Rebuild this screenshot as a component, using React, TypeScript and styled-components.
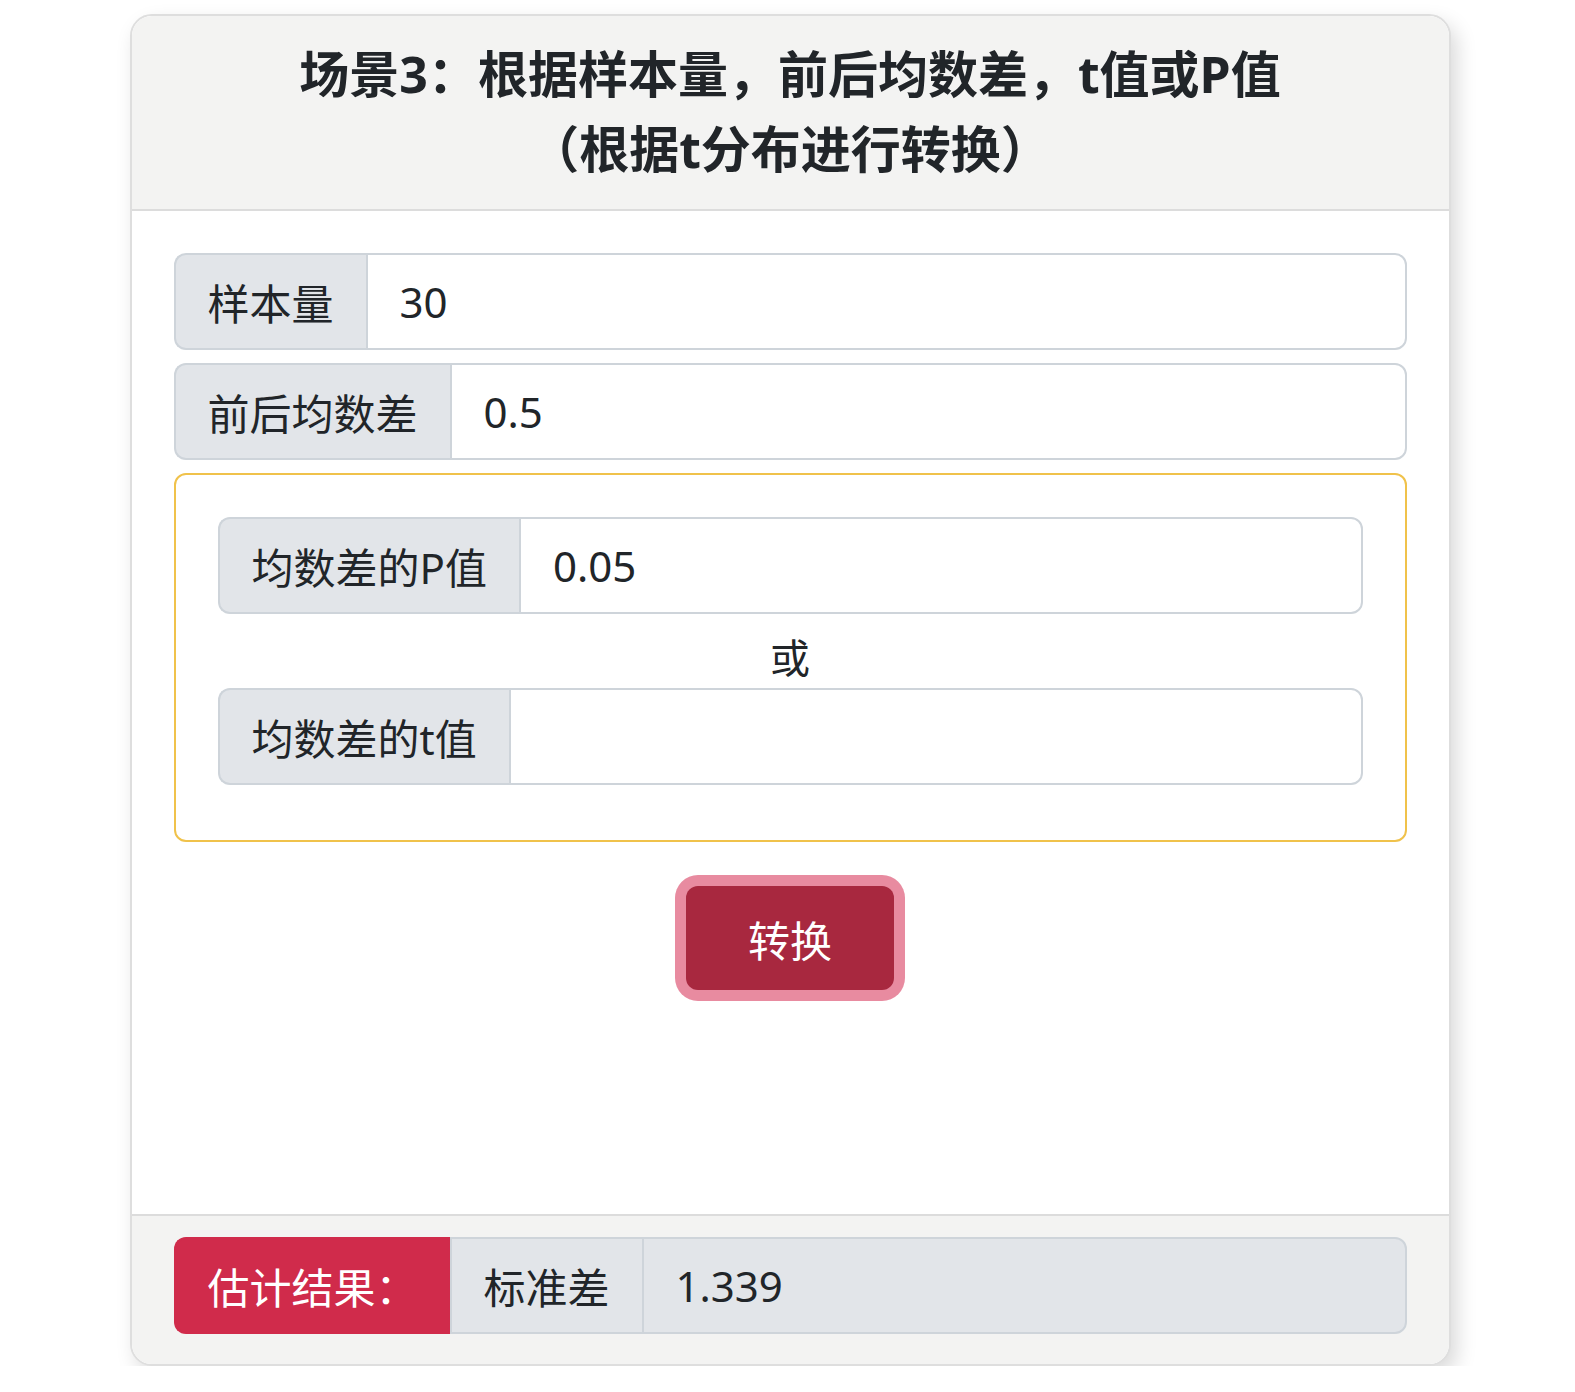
import React from 'react';
import styled, { createGlobalStyle } from 'styled-components';

const GlobalStyle = createGlobalStyle`
  html, body {
    margin: 0;
    background: #fff;
    font-family: "Noto Sans", "Noto Sans CJK SC", sans-serif;
    color: #212529;
  }
`;

const Page = styled.div`
  display: flex;
  justify-content: center;
  padding: 14px 0 0 5px;
`;

const Card = styled.div`
  width: 1321px;
  box-sizing: border-box;
  background: #fff;
  border: 2px solid #dedede;
  border-radius: 22px;
  overflow: hidden;
  box-shadow: 6px 9px 20px rgba(0, 0, 0, 0.15);
`;

const CardHeader = styled.div`
  background: #f3f3f2;
  border-bottom: 2px solid #dcdcdc;
  padding: 21px 20px 22px;
  text-align: center;
`;

const Title = styled.h2`
  margin: 0;
  font-size: 50px;
  font-weight: 700;
  line-height: 75px;
  color: #212529;
`;

const CardBody = styled.div`
  box-sizing: border-box;
  min-height: 1003px;
  padding: 42px 42px 40px;
`;

const InputGroup = styled.div<{ $last?: boolean }>`
  display: flex;
  height: 97px;
  margin-bottom: ${(p) => (p.$last ? '0' : '13px')};
`;

const Addon = styled.span<{ $tone?: 'danger' | 'muted' }>`
  display: flex;
  align-items: center;
  box-sizing: border-box;
  padding: 0 32px;
  font-size: 42px;
  white-space: nowrap;
  background: ${(p) => (p.$tone === 'danger' ? '#d02b4b' : '#e2e5e9')};
  color: ${(p) => (p.$tone === 'danger' ? '#fff' : '#212529')};
  border: 2px solid ${(p) => (p.$tone === 'danger' ? '#d02b4b' : '#ced4da')};
  border-right-width: 0;

  &:first-child {
    border-radius: 12px 0 0 12px;
  }
  & + & {
    border-left: 2px solid #ced4da;
  }
`;

const Field = styled.input<{ $readonly?: boolean }>`
  flex: 1;
  min-width: 0;
  box-sizing: border-box;
  padding: 0 32px;
  font-family: inherit;
  font-size: 42px;
  color: #212529;
  background: ${(p) => (p.$readonly ? '#e2e5e9' : '#fff')};
  border: 2px solid #ced4da;
  border-radius: 0 12px 12px 0;
  outline: none;
`;

const ChoiceBox = styled.div`
  border: 2px solid #f0c24b;
  border-radius: 12px;
  padding: 42px 42px 55px;
  margin-bottom: 32px;
`;

const OrText = styled.div`
  text-align: center;
  font-size: 40px;
  line-height: 61px;
`;

const ButtonRow = styled.div`
  display: flex;
  justify-content: center;
  padding-top: 12px;
`;

const ConvertButton = styled.button`
  width: 208px;
  height: 104px;
  border: none;
  border-radius: 12px;
  background: #a8283f;
  color: #fff;
  font-family: inherit;
  font-size: 42px;
  box-shadow: 0 0 0 11px #e88ba0;
  cursor: pointer;
`;

const CardFooter = styled.div`
  background: #f3f3f2;
  border-top: 2px solid #dcdcdc;
  padding: 21px 42px 30px;
`;

const App: React.FC = () => {
  return (
    <Page>
      <GlobalStyle />
      <Card>
        <CardHeader>
          <Title>
            场景3：根据样本量，前后均数差，t值或P值
            <br />
            （根据t分布进行转换）
          </Title>
        </CardHeader>
        <CardBody>
          <InputGroup>
            <Addon>样本量</Addon>
            <Field defaultValue="30" />
          </InputGroup>
          <InputGroup>
            <Addon>前后均数差</Addon>
            <Field defaultValue="0.5" />
          </InputGroup>
          <ChoiceBox>
            <InputGroup>
              <Addon>均数差的P值</Addon>
              <Field defaultValue="0.05" />
            </InputGroup>
            <OrText>或</OrText>
            <InputGroup $last>
              <Addon>均数差的t值</Addon>
              <Field defaultValue="" />
            </InputGroup>
          </ChoiceBox>
          <ButtonRow>
            <ConvertButton>转换</ConvertButton>
          </ButtonRow>
        </CardBody>
        <CardFooter>
          <InputGroup $last>
            <Addon $tone="danger">估计结果：</Addon>
            <Addon>标准差</Addon>
            <Field $readonly readOnly defaultValue="1.339" />
          </InputGroup>
        </CardFooter>
      </Card>
    </Page>
  );
};

export default App;
